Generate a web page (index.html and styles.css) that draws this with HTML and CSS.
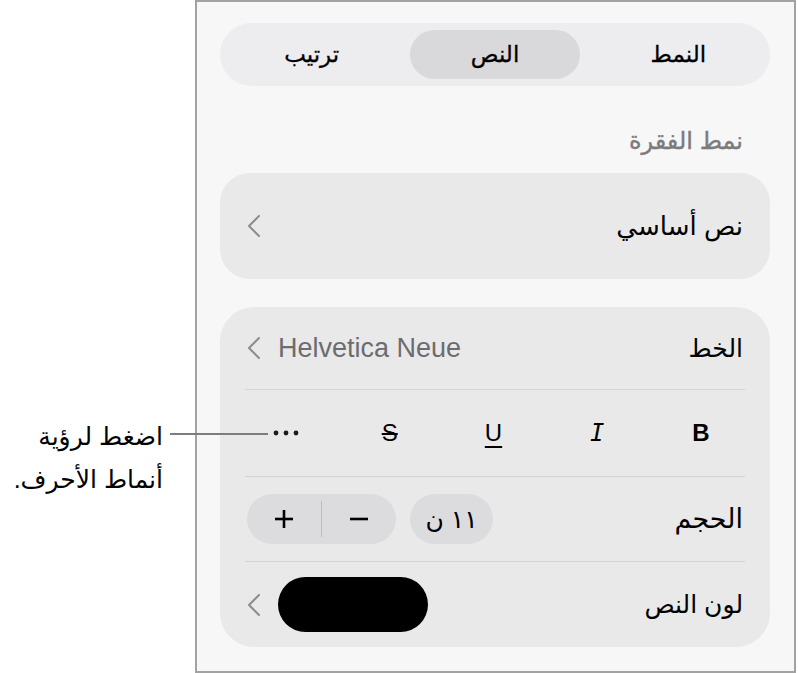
FILE: index.html
```html
<!DOCTYPE html>
<html lang="ar">
<head>
    <meta charset="UTF-8">
    <meta name="viewport" content="width=device-width, initial-scale=1.0">
    <title>تنسيق النص</title>
    <link rel="stylesheet" href="styles.css">
</head>
<body>
    <div class="page">
        <!-- شرح الزر -->
        <div class="callout" dir="rtl">
            <p class="callout-text">اضغط لرؤية<br>أنماط الأحرف.</p>
        </div>
        <span class="leader"></span>

        <!-- لوحة التنسيق -->
        <aside class="panel" dir="rtl">
            <div class="tabs">
                <div class="tab">النمط</div>
                <div class="tab tab-active">النص</div>
                <div class="tab">ترتيب</div>
            </div>

            <h3 class="section-title">نمط الفقرة</h3>

            <div class="card style-card">
                <span class="card-label">نص أساسي</span>
                <svg class="chevron" width="14" height="24" viewBox="0 0 14 24"><polyline points="12,2 2,12 12,22"/></svg>
            </div>

            <div class="card font-card">
                <div class="row">
                    <span class="row-label">الخط</span>
                    <span class="row-value">
                        <span class="font-name">Helvetica Neue</span>
                        <svg class="chevron" width="14" height="24" viewBox="0 0 14 24"><polyline points="12,2 2,12 12,22"/></svg>
                    </span>
                </div>

                <div class="row format-row">
                    <span class="fmt fmt-bold">B</span>
                    <span class="fmt fmt-italic">I</span>
                    <span class="fmt fmt-under">U</span>
                    <span class="fmt fmt-strike">S</span>
                    <svg class="fmt" width="26" height="6" viewBox="0 0 26 6">
                        <circle cx="3" cy="3" r="2.4"/><circle cx="13" cy="3" r="2.4"/><circle cx="23" cy="3" r="2.4"/>
                    </svg>
                </div>

                <div class="row">
                    <span class="row-label size-label">الحجم</span>
                    <span class="size-controls">
                        <span class="size-pill">١١ ن</span>
                        <span class="stepper">
                            <span class="step">
                                <svg width="20" height="20" viewBox="0 0 20 20"><line x1="1" y1="10" x2="19" y2="10"/></svg>
                            </span>
                            <span class="step-sep"></span>
                            <span class="step">
                                <svg width="20" height="20" viewBox="0 0 20 20"><line x1="1" y1="10" x2="19" y2="10"/><line x1="10" y1="1" x2="10" y2="19"/></svg>
                            </span>
                        </span>
                    </span>
                </div>

                <div class="row">
                    <span class="row-label">لون النص</span>
                    <span class="row-value">
                        <span class="swatch"></span>
                        <svg class="chevron" width="14" height="24" viewBox="0 0 14 24"><polyline points="12,2 2,12 12,22"/></svg>
                    </span>
                </div>
            </div>
        </aside>
    </div>
</body>
</html>
```

FILE: styles.css
```css
* {
    margin: 0;
    padding: 0;
    box-sizing: border-box;
}

body {
    font-family: "Liberation Sans", "DejaVu Sans", sans-serif;
    background: #ffffff;
    color: #000;
}

.page {
    position: relative;
    display: flex;
    height: 673px;
}

/* شرح على اليسار */
.callout {
    width: 195px;
    padding-top: 415px;
    padding-right: 32px;
}

.callout-text {
    font-size: 25px;
    line-height: 43px;
    text-align: right;
}

.leader {
    position: absolute;
    left: 170px;
    top: 433px;
    width: 98px;
    height: 2px;
    background: #7d7d7d;
    z-index: 2;
}

/* اللوحة */
.panel {
    width: 601px;
    height: 673px;
    background: #f7f7f8;
    border: 2px solid #a2a2a2;
    padding: 21px 24px 0 23px;
}

.tabs {
    display: grid;
    grid-template-columns: repeat(3, 1fr);
    background: #ededef;
    border-radius: 32px;
    padding: 7px 0;
}

.tab {
    margin: 0 7px;
    height: 49px;
    border-radius: 25px;
    display: flex;
    align-items: center;
    justify-content: center;
    font-size: 23px;
    -webkit-text-stroke: 0.3px #000;
}

.tab-active {
    background: #d9d9db;
}

.section-title {
    font-size: 24px;
    font-weight: normal;
    color: #7b7b7e;
    -webkit-text-stroke: 0.4px #7b7b7e;
    line-height: 24px;
    margin: 43px 0 20px;
    padding: 0 27px;
}

.card {
    background: #e9e9ea;
}

.style-card {
    height: 106px;
    border-radius: 30px;
    padding: 0 27px;
    display: flex;
    align-items: center;
    justify-content: space-between;
    font-size: 26px;
}

.chevron {
    display: block;
    fill: none;
    stroke: #8d8d90;
    stroke-width: 2;
    stroke-linecap: round;
    stroke-linejoin: round;
}

.font-card {
    margin-top: 28px;
    border-radius: 34px;
    padding: 0 25px;
}

.row {
    display: flex;
    align-items: center;
    justify-content: space-between;
    border-bottom: 1px solid #d3d3d5;
    height: 85px;
    padding: 0 2px;
}

.row:first-child {
    height: 83px;
}

.row:nth-child(2) {
    height: 87px;
}

.row:last-child {
    border-bottom: none;
}

.row-label {
    font-size: 25px;
}

.size-label {
    font-size: 27px;
}

.row-value {
    display: flex;
    align-items: center;
    gap: 17px;
}

.font-name {
    font-size: 27px;
    color: #6c6c70;
}

/* أزرار B I U S */
.format-row {
    padding: 0 31px 0 28px;
}

.fmt {
    width: 26px;
    text-align: center;
    font-size: 24px;
    line-height: 26px;
    fill: #1c1c1e;
}

.fmt-bold {
    font-weight: bold;
}

.fmt-italic {
    font-family: "DejaVu Sans Mono", monospace;
    font-style: italic;
}

.fmt-under {
    text-decoration: underline;
    text-decoration-thickness: 1.5px;
    text-underline-offset: 5px;
}

.fmt-strike {
    text-decoration: line-through;
    text-decoration-thickness: 1.5px;
}

/* الحجم */
.size-controls {
    display: flex;
    align-items: center;
    gap: 14px;
}

.size-pill {
    width: 83px;
    height: 50px;
    border-radius: 25px;
    background: #dcdcde;
    display: flex;
    align-items: center;
    justify-content: center;
    font-size: 25px;
}

.stepper {
    width: 149px;
    height: 50px;
    border-radius: 25px;
    background: #dcdcde;
    display: flex;
    align-items: center;
}

.step {
    flex: 1;
    display: flex;
    justify-content: center;
}

.step svg {
    stroke: #000;
    stroke-width: 2.6;
}

.step-sep {
    width: 1px;
    height: 36px;
    background: #bdbdc0;
}

.swatch {
    width: 150px;
    height: 55px;
    border-radius: 28px;
    background: #000;
}
```
